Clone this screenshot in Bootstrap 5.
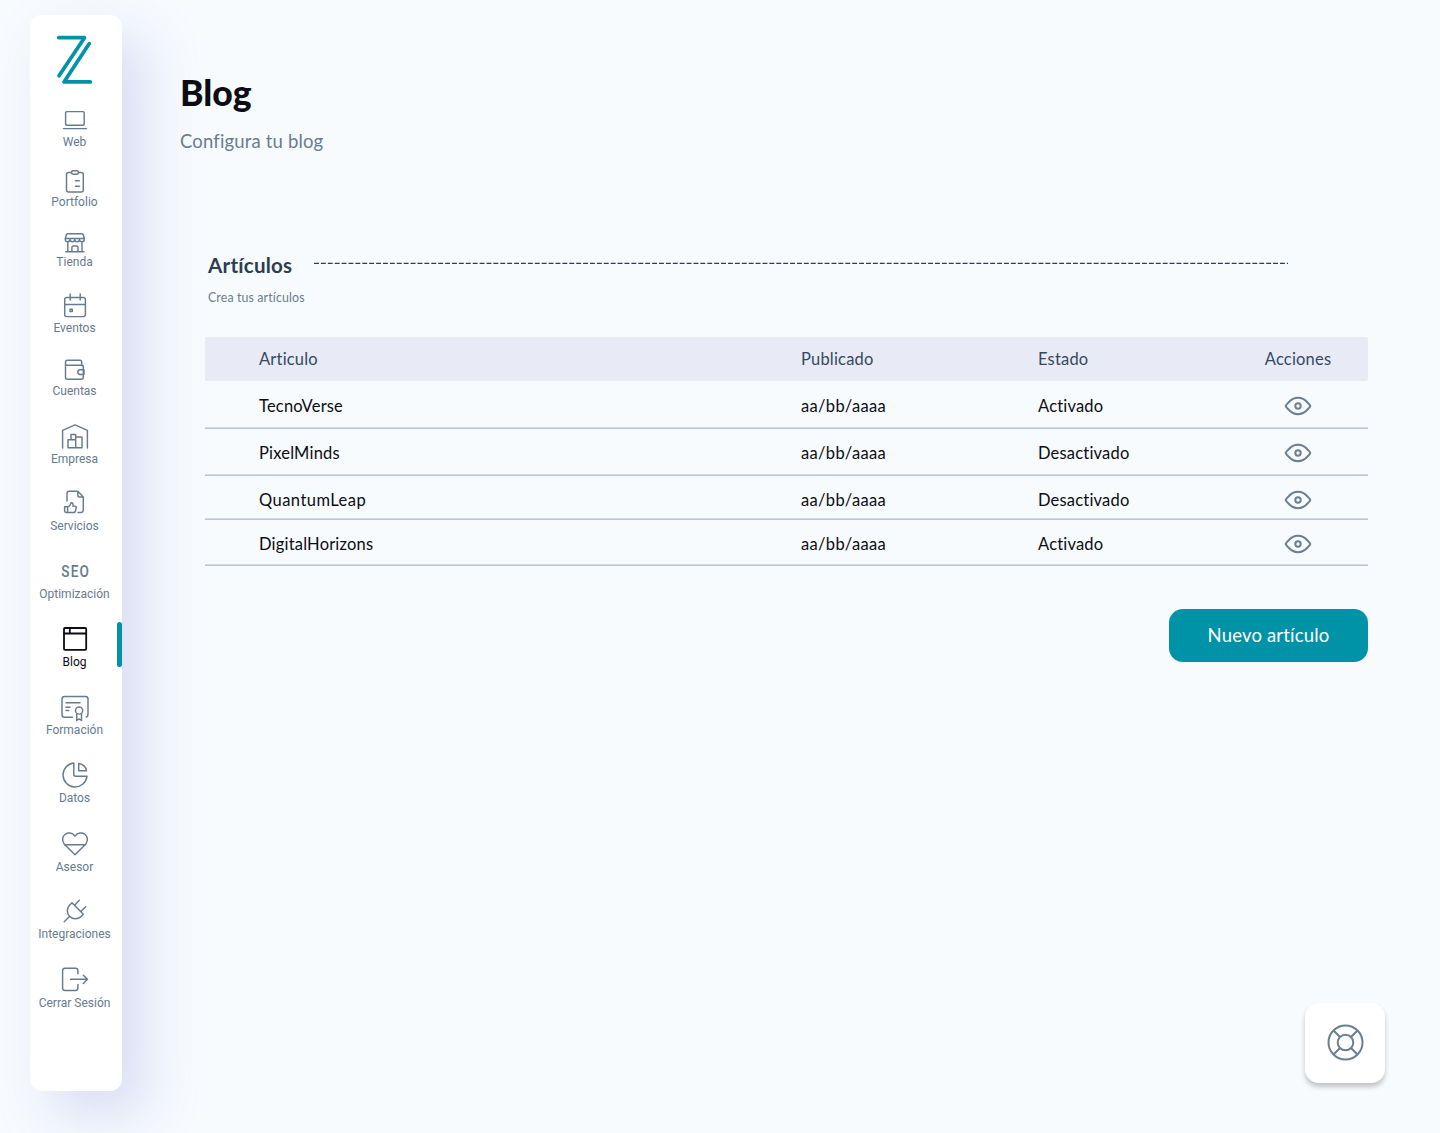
<!DOCTYPE html>
<html lang="es">
<head>
<meta charset="utf-8">
<meta name="viewport" content="width=device-width, initial-scale=1">
<title>Blog</title>
<link rel="stylesheet" href="https://cdn.jsdelivr.net/npm/bootstrap@5.3.0/dist/css/bootstrap.min.css">
<style>
body{background:#f7fbfe;font-family:Lato,"Open Sans",sans-serif;color:#0c0d12;height:1133px;overflow:hidden;font-variant-ligatures:none}
.side-panel{width:92px;height:1076px;margin:15px 0 0 30px;padding:19px 3px 0 0;background:#fff;border-radius:12px;box-shadow:22px 24px 54px rgba(150,150,220,.3)}
.brand-mark{margin-bottom:17px}
.side-link{font:400 12px/14px Roboto,sans-serif;color:#667b8e;text-decoration:none;width:92px;margin-right:-3px;padding-right:3px;white-space:nowrap}
.side-link svg,.brand-mark{display:block;overflow:visible;fill:none;stroke:currentColor;stroke-width:1.45;stroke-linecap:round;stroke-linejoin:round}
.brand-mark{color:#0093a8;stroke-width:3.7}
.side-link.active{color:#0c0d12}
.side-link.active svg{stroke-width:1.8}
.side-link.active::after{content:"";position:absolute;right:0;top:-1px;width:5px;height:45px;border-radius:2.5px;background:#0093a8}
.gap-s{margin-top:14px}.gap-m{margin-top:17px}.gap-l{margin-top:20px}.gap-xl{margin-top:21px}.gap-2x{margin-top:22px}.gap-3x{margin-top:23px}
.main-area{padding:71px 72px 0 58px}
.page-title{font-size:35.5px;line-height:44px;font-weight:900;margin:0}
.page-sub{font-size:18.5px;line-height:24px;letter-spacing:.16px;color:#6b7c8d;margin:14px 0 0}
.articles{margin:98px 0 0 25px}
.section-title{font-size:20.6px;line-height:28px;font-weight:700;letter-spacing:.22px;color:#2c3e50;width:86px;margin:0 0 0 3px;white-space:nowrap}
.dash-line{width:976px;height:2px;margin:0 0 4px 19px}
.section-sub{font-size:12.4px;line-height:16px;letter-spacing:.12px;color:#6b7c8d;margin:11px 0 31px 3px}
.art-table{table-layout:fixed;width:1163px;font-size:16.5px;line-height:20px;letter-spacing:.19px;border-collapse:separate;border-spacing:0;margin:0}
.art-table th{background:#e8ebf6;color:#34495e;font-weight:400;height:44px;padding:12px 0 0;vertical-align:top}
.art-table th:first-child{border-radius:2px 0 0 2px}.art-table th:last-child{border-radius:0 2px 2px 0}
.art-table td{padding:14px 0 0;vertical-align:top;box-shadow:inset 0 -1px #bfc3d0,inset 0 -2px #d6dae4;height:47px}
.art-table tr>:first-child{padding-left:54px}
.art-table td:nth-child(2){letter-spacing:.33px}
.art-table .r-first td{height:48px;padding-top:15px}.art-table .r-short td{height:44px}.art-table .r-last td{height:46px}
.art-table .r-short td:first-child{letter-spacing:.45px}
.eye{display:block;margin:0 auto;fill:none;stroke:#6b7f90;stroke-width:2}
.btn-new,.btn-new:hover{width:199px;height:53px;border-radius:14px;background:#0093a8;color:#fff;font-size:18.5px;letter-spacing:.18px;margin-top:43px;padding:0}
.help-btn{width:80px;height:80px;right:55px;bottom:50px;border-radius:14px;background:#fff;box-shadow:0 4px 5px rgba(0,0,0,.22);border:0}
</style>
</head>
<body class="position-relative">
<div class="d-flex align-items-start">
<nav class="side-panel d-flex flex-column align-items-center flex-shrink-0">
<svg class="brand-mark flex-shrink-0" width="41" height="52" viewBox="54 34 41 52"><path d="M58.800 37.700H84.500L59 75.800M89.300 43.600 64 81.900H90.300"/></svg>
<a href="#" class="side-link d-flex flex-column align-items-center"><svg width="33" height="32" viewBox="58 103 33 32"><rect x="65.600" y="111.600" width="18.600" height="13.700" rx="1.200"/><path d="M63.500 128.600H86.500"/></svg><span>Web</span></a>
<a href="#" class="side-link gap-s d-flex flex-column align-items-center"><svg width="33" height="32" viewBox="58 163 33 32"><path d="M71.500 172.500H68.500q-2 0-2 2V190q0 2 2 2H81.300q2 0 2-2V174.500q0-2-2-2H78.500M75.500 180.800h3.800M75.500 186.200h3.800"/><rect x="71.500" y="170.700" width="7" height="3.600" rx="1.700"/></svg><span>Portfolio</span></a>
<a href="#" class="side-link gap-s d-flex flex-column align-items-center"><svg width="33" height="32" viewBox="58 223 33 32"><path d="M67.500 233.700H82Q83 233.700 83.300 234.700L84.300 238.500V239.500q0 2.200-2.300 2.200t-2.500-2.200q0 2.200-2.300 2.200t-2.400-2.200q0 2.200-2.400 2.200t-2.400-2.200q0 2.200-2.300 2.200t-2.400-2.200V238.500L66.400 234.700Q66.700 233.700 67.500 233.700ZM65.500 238.400H84.200M67.800 242V251.700M82 242V251.700M65.800 251.800H84M71.900 251.600V247.500q0-1.500 1.500-1.500H76.500q1.500 0 1.500 1.500V251.600"/></svg><span>Tienda</span></a>
<a href="#" class="side-link gap-l d-flex flex-column align-items-center"><svg width="33" height="32" viewBox="58 289 33 32"><rect x="64.700" y="297.400" width="20.700" height="19.200" rx="2"/><path d="M70.200 294V300M80.200 294V300M64.700 304.400H85.400"/><rect x="70" y="309.200" width="2.300" height="2.300"/></svg><span>Eventos</span></a>
<a href="#" class="side-link gap-m d-flex flex-column align-items-center"><svg width="33" height="32" viewBox="58 352 33 32"><path d="M81.700 365V361.700q0-1.500-1.500-1.500H67.500q-2 0-2 2V377.300q0 2 2 2H81.300q2 0 2-2V367q0-1.700-2-1.700H67.500q-2 0-2-2M84 369.700H80.200a2.400 2.400 0 0 0 0 4.800H84Z"/></svg><span>Cuentas</span></a>
<a href="#" class="side-link gap-2x d-flex flex-column align-items-center"><svg width="33" height="32" viewBox="58 420 33 32"><path d="M62.600 448V430.300L75 424.800 87.400 430.300V448M68 447.700V439.700H75.700V447.700ZM75.700 447.700V437H82V447.700ZM71 439.700V434.500H75.700V439.700"/></svg><span>Empresa</span></a>
<a href="#" class="side-link gap-xl d-flex flex-column align-items-center"><svg width="33" height="32" viewBox="58 487 33 32"><path d="M67 501V493.200q0-2 2-2H77.800L83.300 497V510q0 2.400-2.400 2.400H78M77.800 491.200V495.500q0 1.500 1.500 1.500H83.300M64.600 506.800H67.600V512.400H66q-1.400 0-1.400-1.400ZM67.600 507 69.800 505.700 71 502.700q2.500-.3 1.900 3.400H75q1.400 0 1.200 1.500L75.500 511q-.3 1.400-1.700 1.400H67.600"/></svg><span>Servicios</span></a>
<a href="#" class="side-link gap-2x d-flex flex-column align-items-center"><svg width="33" height="32" viewBox="58 555 33 32"><text transform="translate(61.300 577) scale(.8 1)" font-size="17" font-family="Roboto" letter-spacing="1.500" font-weight="500" fill="currentColor" stroke="none">SEO</text></svg><span>Optimización</span></a>
<a href="#" class="side-link active position-relative gap-2x d-flex flex-column align-items-center"><svg width="33" height="32" viewBox="58 623 33 32"><rect x="64" y="628" width="22.200" height="21.800" rx="1"/><path d="M64 633.500H86.200M69.800 628V633.500"/></svg><span>Blog</span></a>
<a href="#" class="side-link gap-2x d-flex flex-column align-items-center"><svg width="33" height="32" viewBox="58 691 33 32"><path d="M72.500 717.300H64.500q-2.500 0-2.500-2.500V699q0-2.500 2.500-2.500H85.500q2.500 0 2.500 2.500V714.500q0 2-1.700 2.500M66 702.700H80M66 707.200H70M66 710.500H68.700M76.700 714V720.500L79.100 718.900 81.500 720.500V714"/><circle cx="79.100" cy="710.500" r="3.600"/></svg><span>Formación</span></a>
<a href="#" class="side-link gap-2x d-flex flex-column align-items-center"><svg width="33" height="32" viewBox="58 759 33 32"><path d="M73.800 763A12 12 0 1 0 87 776.200H75.800q-2 0-2-2ZM78.700 764V770.800H86.500Q85.500 764.500 78.700 763.500Z"/></svg><span>Datos</span></a>
<a href="#" class="side-link gap-3x d-flex flex-column align-items-center"><svg width="33" height="32" viewBox="58 828 33 32"><path d="M75 854.800 64.300 844.300C58.500 836 69 828.500 75 836C81 828.500 91.500 836 85.700 844.300ZM64.500 844.700H85.500"/></svg><span>Asesor</span></a>
<a href="#" class="side-link gap-xl d-flex flex-column align-items-center"><svg width="33" height="32" viewBox="58 895 33 32"><path d="M72 902.700 83.300 914.300 81 916.600A8.100 8.100 0 0 1 69.500 905.200ZM79.300 900.300 75.300 904.600M85.700 906.700 81.500 910.800M64.200 921.700 69 916.900"/></svg><span>Integraciones</span></a>
<a href="#" class="side-link gap-3x d-flex flex-column align-items-center"><svg width="33" height="32" viewBox="58 964 33 32"><path d="M77.900 973.700V970.600q0-2.400-2.400-2.400H65q-2.400 0-2.400 2.400V988q0 2.400 2.400 2.400H75.500q2.400 0 2.400-2.400V984.500M70.500 979.300H87.500M83.300 975.200 87.500 979.300 83.300 983.500"/></svg><span>Cerrar Sesión</span></a>
</nav>
<main class="main-area flex-grow-1">
<h1 class="page-title">Blog</h1>
<p class="page-sub">Configura tu blog</p>
<section class="articles">
<div class="d-flex align-items-center"><h2 class="section-title">Artículos</h2><svg class="dash-line" viewBox="0 0 976 2"><path d="M1 1.400H975" stroke="#2c3e50" stroke-width="1.200" stroke-dasharray="4.900 2"/></svg></div>
<p class="section-sub">Crea tus artículos</p>
<table class="art-table">
<colgroup><col style="width:596px"><col style="width:237px"><col style="width:190px"><col style="width:140px"></colgroup>
<thead><tr><th>Articulo</th><th>Publicado</th><th>Estado</th><th class="text-center">Acciones</th></tr></thead>
<tbody>
<tr class="r-first"><td>TecnoVerse</td><td>aa/bb/aaaa</td><td>Activado</td><td><svg class="eye" width="28" height="20" viewBox="0 0 28 20"><path d="M1.700 10Q2 8.900 4.500 6.500C10 .3 18 .3 23.500 6.500Q26 8.900 26.300 10Q26 11.100 23.500 13.500C18 19.700 10 19.700 4.500 13.500Q2 11.100 1.700 10Z"/><circle cx="14" cy="10" r="2.700"/></svg></td></tr>
<tr><td>PixelMinds</td><td>aa/bb/aaaa</td><td>Desactivado</td><td><svg class="eye" width="28" height="20" viewBox="0 0 28 20"><path d="M1.700 10Q2 8.900 4.500 6.500C10 .3 18 .3 23.500 6.500Q26 8.900 26.300 10Q26 11.100 23.500 13.500C18 19.700 10 19.700 4.500 13.500Q2 11.100 1.700 10Z"/><circle cx="14" cy="10" r="2.700"/></svg></td></tr>
<tr class="r-short"><td>QuantumLeap</td><td>aa/bb/aaaa</td><td>Desactivado</td><td><svg class="eye" width="28" height="20" viewBox="0 0 28 20"><path d="M1.700 10Q2 8.900 4.500 6.500C10 .3 18 .3 23.500 6.500Q26 8.900 26.300 10Q26 11.100 23.500 13.500C18 19.700 10 19.700 4.500 13.500Q2 11.100 1.700 10Z"/><circle cx="14" cy="10" r="2.700"/></svg></td></tr>
<tr class="r-last"><td>DigitalHorizons</td><td>aa/bb/aaaa</td><td>Activado</td><td><svg class="eye" width="28" height="20" viewBox="0 0 28 20"><path d="M1.700 10Q2 8.900 4.500 6.500C10 .3 18 .3 23.500 6.500Q26 8.900 26.300 10Q26 11.100 23.500 13.500C18 19.700 10 19.700 4.500 13.500Q2 11.100 1.700 10Z"/><circle cx="14" cy="10" r="2.700"/></svg></td></tr>
</tbody>
</table>
<div class="d-flex justify-content-end"><button class="btn btn-new">Nuevo artículo</button></div>
</section>
</main>
</div>
<button class="help-btn position-absolute d-flex align-items-center justify-content-center p-0" aria-label="Ayuda"><svg width="38" height="38" viewBox="0 0 38 38" fill="none" stroke="#6b7f90" stroke-width="2"><circle cx="19.500" cy="18.500" r="17"/><circle cx="19.500" cy="18.500" r="7.800"/><path d="M7.500 6.500 14 13M31.500 6.500 25 13M7.500 30.500 14 24M31.500 30.500 25 24"/></svg></button>
<script src="https://cdn.jsdelivr.net/npm/bootstrap@5.3.0/dist/js/bootstrap.bundle.min.js"></script>
</body>
</html>
